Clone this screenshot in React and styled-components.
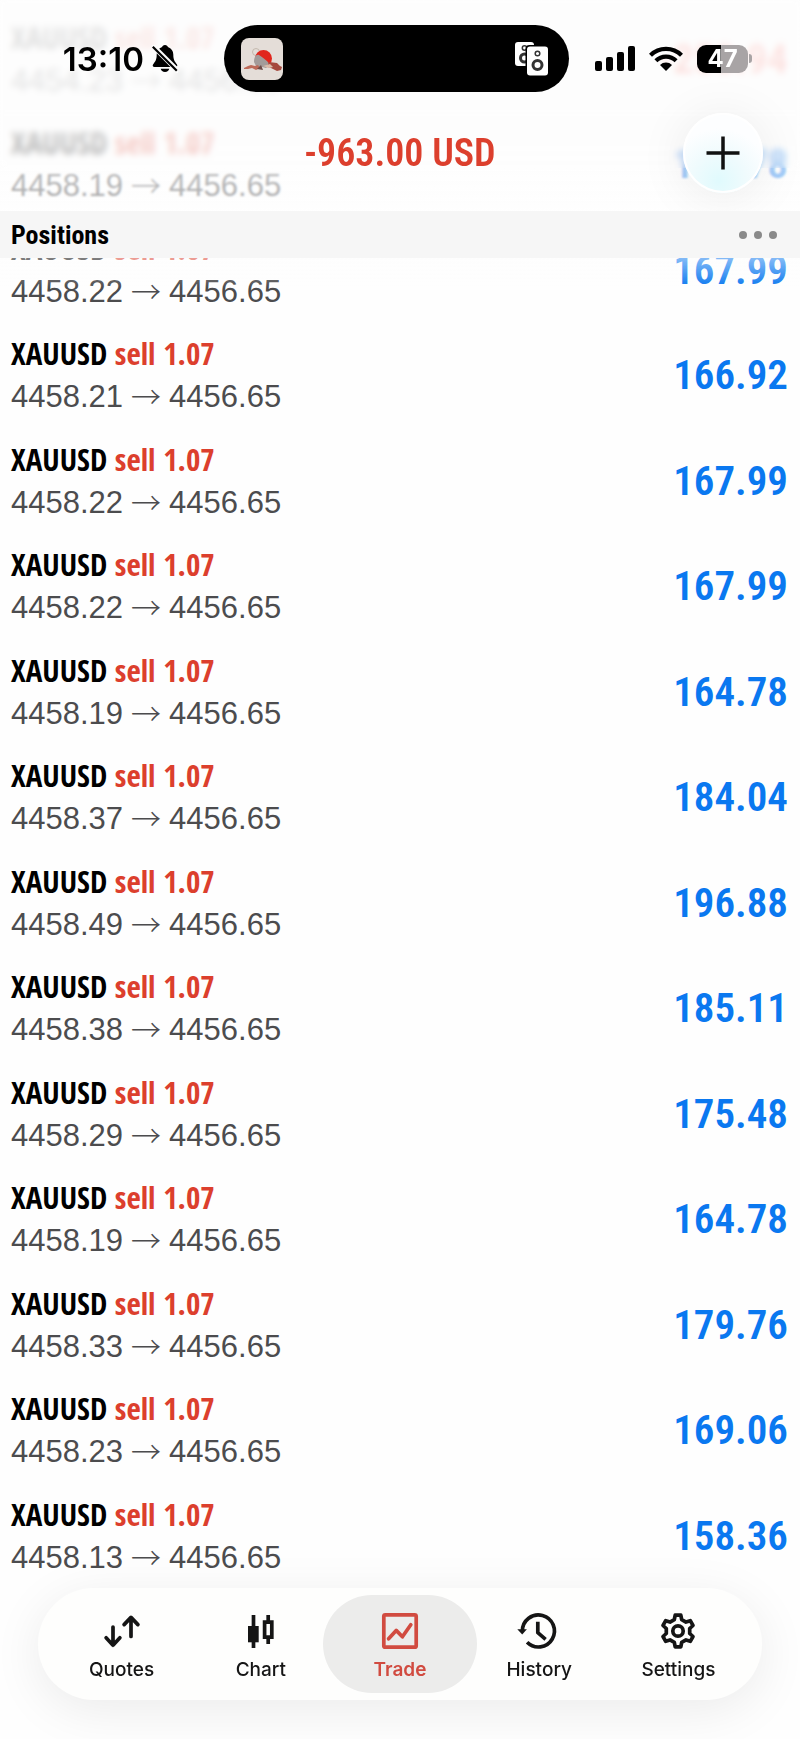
import React, { useState } from "react";
import styled, { createGlobalStyle } from "styled-components";

const positions = [
  { open: "4454.23", profit: "-258.94" },
  { open: "4458.19", profit: "164.78" },
  { open: "4458.22", profit: "167.99" },
  { open: "4458.21", profit: "166.92" },
  { open: "4458.22", profit: "167.99" },
  { open: "4458.22", profit: "167.99" },
  { open: "4458.19", profit: "164.78" },
  { open: "4458.37", profit: "184.04" },
  { open: "4458.49", profit: "196.88" },
  { open: "4458.38", profit: "185.11" },
  { open: "4458.29", profit: "175.48" },
  { open: "4458.19", profit: "164.78" },
  { open: "4458.33", profit: "179.76" },
  { open: "4458.23", profit: "169.06" },
  { open: "4458.13", profit: "158.36" }
];

// outline of the six-toothed gear, centred on 18,18
const gearPoints = [0, 60, 120, 180, 240, 300]
  .flatMap(a => [[a - 18, 12], [a - 10, 16], [a + 10, 16], [a + 18, 12]])
  .map(([deg, r]) => {
    const t = (deg * Math.PI) / 180;
    return `${(18 + r * Math.sin(t)).toFixed(1)},${(18 - r * Math.cos(t)).toFixed(1)}`;
  })
  .join(" ");

const tabs = [
  {
    name: "Quotes",
    icon: (
      <g strokeLinecap="round">
        <path d="M9 14V32M2.100 24.800l6.900 7.400 6.900-7.400" />
        <path d="M27 23.500V5M20.100 11.600l6.900-7.200 6.900 7.200" />
      </g>
    )
  },
  {
    name: "Chart",
    icon: (
      <g>
        <path d="M10.500 2v33" />
        <path d="M5 13h10.700v16.300H5z" fill="currentColor" stroke="none" />
        <path d="M25.200 2v6M25.200 25v6M21.600 9.200h7.200v15h-7.200z" strokeLinejoin="miter" />
      </g>
    )
  },
  {
    name: "Trade",
    icon: (
      <g>
        <rect x="1.800" y="1.800" width="32.400" height="32.400" rx="1.500" />
        <path d="M6.600 25.800l7.600-8.400 6.200 6.400 8.400-12" strokeLinecap="round" />
      </g>
    )
  },
  {
    name: "History",
    icon: (
      <g>
        <path d="M1.400 18A16 16 0 1 1 6.100 29.300" />
        <path d="M-3.700 16.300h9.600L1.200 21.600z" fill="currentColor" stroke="none" />
        <path d="M16.800 8.700v11l7.800 6.600" />
      </g>
    )
  },
  {
    name: "Settings",
    icon: (
      <g>
        <polygon points={gearPoints} />
        <circle cx="18" cy="18" r="5.200" />
      </g>
    )
  }
];

function StatusBar() {
  return (
    <Status>
      <Clock>
        <Time>13:10</Time>
        <svg width="26" height="28" viewBox="0 0 26 28">
          <path d="M13 0c-1.800 0-2.600 1.200-2.900 2C6.600 3.200 4.700 6 4.700 9.600c0 5-1.300 7-3.300 9.300-1.300 1.500-.7 3 1.200 3h20.800c1.900 0 2.500-1.500 1.200-3-2-2.300-3.300-4.300-3.300-9.300 0-3.600-1.900-6.400-5.400-7.600-.3-.8-1.100-2-2.900-2z" />
          <path d="M8.700 23.800h8.600c-.4 1.900-2 3.200-4.300 3.200s-3.900-1.300-4.300-3.200z" />
          <path d="M0 0l27 27" stroke="#fdfdfd" strokeWidth="5" />
          <path d="M.8 1.800l24 24" stroke="#000" strokeWidth="2.200" />
        </svg>
      </Clock>
      <Island>
        <svg width="42" height="42" viewBox="0 0 42 42">
          <rect width="42" height="42" rx="8" fill="#e4ddd8" />
          <circle cx="15" cy="14" r="3.500" fill="none" stroke="#b8aa9e" strokeWidth=".7" />
          <circle cx="22.500" cy="20.500" r="8.500" fill="#e1261d" />
          <path d="M13 24c0-5 2-8 5-7 3 2 8 5 11 10l-4 3-4-1-2 2-4-3z" fill="#a39b99" />
          <path d="M28 24l8 1 3 3 2 1-1 3-4 1-6-3-4-1z" fill="#a5483d" />
          <path d="M3 30l4-2 3-1 4 1 3-1 2 3-4 2-4-2-4 1-4 0z" fill="#bd6a58" />
          <path d="M16 31l4-4 2 5z" fill="#6f4a45" />
          <path d="M22 28l7-2 3 3-4 1z" fill="#d9b9a8" />
        </svg>
        <svg width="33" height="34" viewBox="0 0 33 34">
          <rect width="19" height="24" rx="3" fill="#fff" />
          <circle cx="9.500" cy="6" r="2.200" fill="none" stroke="#333" strokeWidth="1.500" />
          <circle cx="9.500" cy="16" r="4" fill="none" stroke="#333" strokeWidth="3" />
          <rect x="10.500" y="3" width="23" height="31" rx="4" fill="#000" />
          <rect x="12" y="4.500" width="21" height="29" rx="3" fill="#fff" />
          <circle cx="22.500" cy="11.500" r="2.300" fill="none" stroke="#333" strokeWidth="1.500" />
          <circle cx="22.500" cy="23" r="4.500" fill="none" stroke="#333" strokeWidth="3" />
        </svg>
      </Island>
      <Indicators>
        <svg width="40" height="26" viewBox="0 0 40 26">
          <rect y="15" width="7" height="10" rx="2" />
          <rect x="11" y="11" width="7" height="14" rx="2" />
          <rect x="22" y="6" width="7" height="19" rx="2" />
          <rect x="33" width="7" height="25" rx="2" />
        </svg>
        <svg width="34" height="26" viewBox="0 0 34 26">
          <path d="M1.500 9.200a22 22 0 0 1 31 0" fill="none" stroke="#000" strokeWidth="4.200" />
          <path d="M6.900 14.800a14.300 14.300 0 0 1 20.200 0" fill="none" stroke="#000" strokeWidth="4.200" />
          <path d="M11 19a8.500 8.500 0 0 1 12 0l-6 6z" />
        </svg>
        <Battery>
          <Level>47</Level>
        </Battery>
      </Indicators>
    </Status>
  );
}

export default function App() {
  const [active, setActive] = useState("Trade");

  return (
    <Screen>
      <GlobalStyle />
      <Header>
        <Frost />
        <DeepFrost />
        <StatusBar />
        <TitleBar>
          <Total>-963.00 USD</Total>
          <AddButton aria-label="New order">
            <svg width="34" height="34" viewBox="0 0 34 34">
              <path d="M17 .5v33M.5 17h33" stroke="#111" strokeWidth="3.500" />
            </svg>
          </AddButton>
        </TitleBar>
        <SectionBar>
          <SectionTitle>Positions</SectionTitle>
          <MoreButton aria-label="More">
            <Dot />
            <Dot />
            <Dot />
          </MoreButton>
        </SectionBar>
      </Header>
      <List>
        {positions.map((item, i) => (
          <Row key={i}>
            <div>
              <Deal>
                XAUUSD <Side>sell 1.07</Side>
              </Deal>
              <Prices>
                {item.open}
                <Arrow>→</Arrow>
                4456.65
              </Prices>
            </div>
            <Profit $loss={item.profit.startsWith("-")}>{item.profit}</Profit>
          </Row>
        ))}
      </List>
      <TabBar>
        {tabs.map(tab => (
          <Tab key={tab.name} $active={tab.name === active} onClick={() => setActive(tab.name)}>
            <TabIcon viewBox="0 0 36 36">{tab.icon}</TabIcon>
            {tab.name}
          </Tab>
        ))}
      </TabBar>
    </Screen>
  );
}

const red = "#dc3f2d";

const GlobalStyle = createGlobalStyle`
  * {
    box-sizing: border-box;
  }

  body {
    margin: 0;
    background: #fefefe;
    font-family: "Liberation Sans", Arial, sans-serif;
  }
`;

const Screen = styled.div`
  min-height: 100vh;
  padding-bottom: 150px;
`;

const Button = styled.button`
  padding: 0;
  border: none;
  background: none;
  cursor: pointer;
`;

const Header = styled.header`
  position: fixed;
  top: 0;
  left: 0;
  right: 0;
  z-index: 2;
`;

/* two layers, so that the blur eases off towards the section bar */
const Frost = styled.div`
  position: absolute;
  inset: 0 0 47px;
  z-index: -1;
  background: linear-gradient(rgba(253, 253, 253, 0.92), rgba(253, 253, 253, 0.8) 60%, rgba(253, 253, 253, 0.5));
  backdrop-filter: blur(1px);
`;

const DeepFrost = styled.div`
  position: absolute;
  inset: 0 0 90px;
  z-index: -1;
  backdrop-filter: blur(3px);
`;

const Status = styled.div`
  display: grid;
  grid-template-columns: 1fr 345px 1fr;
  align-items: center;
  padding: 25px 7px 0 0;
`;

const Clock = styled.div`
  display: flex;
  align-items: center;
  justify-content: flex-end;
  gap: 8px;
  padding-right: 46px;
`;

const Time = styled.span`
  font: 600 33px/40px Inter, sans-serif;
`;

const Island = styled.div`
  display: flex;
  align-items: center;
  justify-content: space-between;
  height: 67px;
  padding: 0 21px 0 17px;
  border-radius: 34px;
  background: #000;
`;

const Indicators = styled.div`
  display: flex;
  align-items: center;
  gap: 14px;
  padding-left: 26px;
`;

const Battery = styled.div`
  position: relative;
  width: 51px;
  height: 28px;
  border-radius: 9px;
  background: linear-gradient(90deg, #000 47%, #a8a4a5 47%);

  &::after {
    content: "";
    position: absolute;
    left: 52px;
    top: 9px;
    width: 3px;
    height: 9px;
    border-radius: 0 4px 4px 0;
    background: #a8a4a5;
  }
`;

const Level = styled.span`
  display: block;
  color: #fff;
  font: 700 24px/28px Inter, sans-serif;
  text-align: center;
`;

const TitleBar = styled.div`
  display: grid;
  grid-template-columns: 1fr auto 1fr;
  align-items: center;
  padding: 21px 37px 18px;
`;

const Total = styled.h1`
  grid-column: 2;
  margin: 0;
  color: ${red};
  font: 600 38px/48px "Roboto Condensed", sans-serif;
`;

const AddButton = styled(Button)`
  display: flex;
  align-items: center;
  justify-content: center;
  justify-self: end;
  width: 80px;
  height: 80px;
  border-radius: 50%;
  background: radial-gradient(circle at 45% 85%, #e0fafd, #f0fbfd 35%, #fdfeff 65%);
  box-shadow: inset 0 0 0 2px #fff, 0 4px 50px rgba(0, 0, 0, 0.08);
`;

const SectionBar = styled.div`
  position: relative;
  display: flex;
  align-items: center;
  justify-content: space-between;
  height: 47px;
  padding: 0 23px 0 11px;
  background: #f6f6f6;

  /* rows fade in below the bar */
  &::after {
    content: "";
    position: absolute;
    top: 100%;
    left: 0;
    right: 0;
    height: 30px;
    background: linear-gradient(rgba(254, 254, 254, 0.5), rgba(254, 254, 254, 0));
    pointer-events: none;
  }
`;

const SectionTitle = styled.h2`
  margin: 0;
  font: 700 26px/32px "Roboto Condensed", sans-serif;
`;

const MoreButton = styled(Button)`
  display: flex;
  gap: 7px;
`;

const Dot = styled.span`
  width: 8px;
  height: 8px;
  border-radius: 50%;
  background: #8a8a8a;
`;

const List = styled.main`
  padding-top: 6px;
`;

const Row = styled.div`
  display: flex;
  align-items: center;
  justify-content: space-between;
  height: 105px;
  padding: 0 12px 0 11px;

  &:nth-child(even) {
    height: 106px;
  }
`;

const Deal = styled.div`
  color: #000;
  font: 700 31px/44px "Open Sans Condensed", sans-serif;
`;

const Side = styled.span`
  color: ${red};
`;

const Prices = styled.div`
  display: flex;
  color: #4c4c4e;
  font-size: 31px;
  line-height: 44px;
`;

const Arrow = styled.span`
  padding: 0 8px;
  font-family: "Noto Sans CJK JP", sans-serif;
  font-size: 30px;
  font-weight: 300;
  line-height: 40px;
`;

const Profit = styled.div`
  color: ${p => (p.$loss ? "#f2382c" : "#0a78f0")};
  font: 600 41px/50px "Roboto Condensed", sans-serif;
`;

const TabBar = styled.nav`
  position: fixed;
  left: 38px;
  right: 38px;
  bottom: 39px;
  z-index: 2;
  display: flex;
  padding: 7px 14px;
  border-radius: 56px;
  background: #fefefd;
  box-shadow: 0 10px 50px rgba(0, 0, 0, 0.08);
`;

/* the highlight is a little wider than its share of the bar */
const Tab = styled(Button)`
  flex: 1;
  display: flex;
  flex-direction: column;
  align-items: center;
  gap: 10px;
  height: 98px;
  margin: 0 -7px;
  padding-top: 18px;
  border-radius: 49px;
  color: ${p => (p.$active ? "#d14b40" : "#151515")};
  background: ${p => (p.$active ? "#ececeb" : "none")};
  font: ${p => (p.$active ? 600 : 500)} 19px/22px Inter, sans-serif;
`;

const TabIcon = styled.svg`
  width: 36px;
  height: 36px;
  overflow: visible;
  fill: none;
  stroke: currentColor;
  stroke-width: 3.7;
  stroke-linejoin: round;
`;
